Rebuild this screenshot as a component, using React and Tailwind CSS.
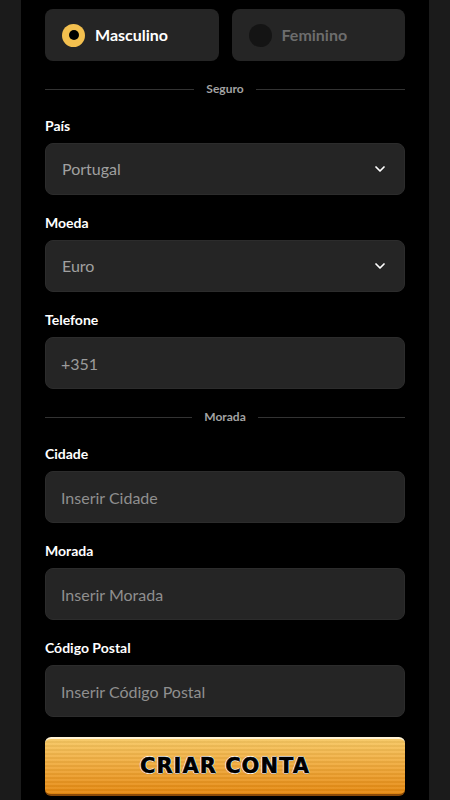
import React, { useState } from 'react';

const ChevronDown = () => (
    <svg width="16" height="16" viewBox="0 0 24 24" fill="none" stroke="#ffffff" strokeWidth="2.6" strokeLinecap="round" strokeLinejoin="round">
        <path d="M6 9l6 6 6-6" />
    </svg>
);

const Divider = ({ label }) => (
    <div className="flex items-center gap-3 h-4 mt-5 mb-[19px]">
        <div className="flex-1 h-px bg-[#333333]" />
        <span className="text-[12px] font-bold text-[#a3a3a3] leading-4">{label}</span>
        <div className="flex-1 h-px bg-[#333333]" />
    </div>
);

const Field = ({ label, children, last }) => (
    <div className={last ? '' : 'mb-[18px]'}>
        <div className="text-[14px] font-bold text-white leading-5 mb-[7px]">{label}</div>
        {children}
    </div>
);

const TextInput = ({ placeholder, defaultValue }) => (
    <input
        type="text"
        defaultValue={defaultValue}
        placeholder={placeholder}
        className="w-full h-[52px] rounded-lg bg-[#252525] border border-[#2c2c2c] px-[15px] text-[16px] text-[#9c9c9c] placeholder-[#8f8f8f] outline-none"
    />
);

const SelectBox = ({ value }) => (
    <div className="w-full h-[52px] rounded-lg bg-[#252525] border border-[#2c2c2c] pl-[16px] pr-[16px] flex items-center justify-between">
        <span className="text-[16px] text-[#a0a0a0]">{value}</span>
        <ChevronDown />
    </div>
);

const App = () => {
    const [gender, setGender] = useState('m');

    return (
        <div className="min-h-[800px] bg-[#1b1b1b] flex justify-center" style={{ fontFamily: 'Lato, "Noto Sans", sans-serif' }}>
            <div className="w-[408px] bg-black px-6 pt-[9px] pb-6">
                <div className="flex gap-[13px]">
                    <button
                        onClick={() => setGender('m')}
                        className="flex-1 h-[52px] rounded-lg bg-[#252525] flex items-center pl-[17px] gap-[10px]"
                    >
                        {gender === 'm' ? (
                            <span className="w-[23px] h-[23px] rounded-full bg-[#f3c04f] flex items-center justify-center">
                                <span className="w-[10px] h-[10px] rounded-full bg-black" />
                            </span>
                        ) : (
                            <span className="w-[23px] h-[23px] rounded-full bg-[#141414]" />
                        )}
                        <span className={`text-[16px] font-bold ${gender === 'm' ? 'text-white' : 'text-[#6d6d6d]'}`}>Masculino</span>
                    </button>
                    <button
                        onClick={() => setGender('f')}
                        className="flex-1 h-[52px] rounded-lg bg-[#252525] flex items-center pl-[17px] gap-[10px]"
                    >
                        {gender === 'f' ? (
                            <span className="w-[23px] h-[23px] rounded-full bg-[#f3c04f] flex items-center justify-center">
                                <span className="w-[10px] h-[10px] rounded-full bg-black" />
                            </span>
                        ) : (
                            <span className="w-[23px] h-[23px] rounded-full bg-[#141414]" />
                        )}
                        <span className={`text-[16px] font-bold ${gender === 'f' ? 'text-white' : 'text-[#6d6d6d]'}`}>Feminino</span>
                    </button>
                </div>

                <Divider label="Seguro" />

                <Field label="País">
                    <SelectBox value="Portugal" />
                </Field>
                <Field label="Moeda">
                    <SelectBox value="Euro" />
                </Field>
                <Field label="Telefone" last>
                    <TextInput defaultValue="+351" />
                </Field>

                <Divider label="Morada" />

                <Field label="Cidade">
                    <TextInput placeholder="Inserir Cidade" />
                </Field>
                <Field label="Morada">
                    <TextInput placeholder="Inserir Morada" />
                </Field>
                <Field label="Código Postal" last>
                    <TextInput placeholder="Inserir Código Postal" />
                </Field>

                <button className="mt-5 w-full h-[59px] rounded-md border-t-2 border-t-[#fff3d6] border-b-2 border-b-[#8a4a08] bg-[repeating-linear-gradient(180deg,rgba(255,255,255,0.06)_0px,rgba(255,255,255,0.06)_2px,rgba(0,0,0,0.04)_2px,rgba(0,0,0,0.04)_4px),linear-gradient(180deg,#f6c762_0%,#efa83a_50%,#e5880f_100%)] flex items-center justify-center">
                    <span
                        className="text-[21px] font-bold text-black tracking-[1px]"
                        style={{ fontFamily: '"DejaVu Sans", sans-serif', WebkitTextStroke: '0.6px #000', textShadow: '0 1px 0 #fff, 1px 0 0 #fff, -1px 0 0 #fff, 0 -1px 0 #fff' }}
                    >
                        CRIAR CONTA
                    </span>
                </button>
            </div>
        </div>
    );
};

export default App;
